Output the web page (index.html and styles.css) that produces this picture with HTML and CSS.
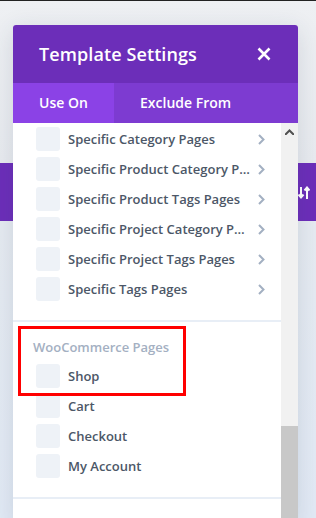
FILE: index.html
```html
<!DOCTYPE html>
<html lang="en">
<head>
  <meta charset="UTF-8">
  <title>Template Settings</title>
  <link rel="stylesheet" href="styles.css">
</head>
<body>

  <div class="pagina">
    <div class="topo"></div>
    <div class="barra">
      <span class="barra-icone">
        <svg width="12" height="14" viewBox="0 0 12 14">
          <path d="M3 1v10M0.5 8.5L3 11.5L5.5 8.5" stroke="#fff" stroke-width="2" fill="none"/>
          <path d="M9 13V2M6.5 4.5L9 1.5L11.5 4.5" stroke="#fff" stroke-width="2" fill="none"/>
        </svg>
      </span>
    </div>
    <div class="fundo"></div>
  </div>

  <div class="modal">
    <div class="cabecalho">
      <h1>Template Settings</h1>
      <svg class="fechar" width="14" height="14" viewBox="0 0 14 14">
        <path d="M1.5 1.5L12.5 12.5M12.5 1.5L1.5 12.5" stroke="#fff" stroke-width="2.6"/>
      </svg>
    </div>
    <div class="abas">
      <div class="aba ativa">Use On</div>
      <div class="aba">Exclude From</div>
    </div>

    <div class="corpo">
      <div class="lista">
        <div class="grupo">
          <div class="item"><span class="caixa"></span><span class="rotulo">Specific Category Pages</span><span class="seta"><svg width="7" height="11" viewBox="0 0 7 11"><path d="M1 1L5.5 5.5L1 10" stroke="#a3b0c2" stroke-width="2" fill="none"/></svg></span></div>
          <div class="item"><span class="caixa"></span><span class="rotulo">Specific Product Category Pages</span><span class="seta"><svg width="7" height="11" viewBox="0 0 7 11"><path d="M1 1L5.5 5.5L1 10" stroke="#a3b0c2" stroke-width="2" fill="none"/></svg></span></div>
          <div class="item"><span class="caixa"></span><span class="rotulo">Specific Product Tags Pages</span><span class="seta"><svg width="7" height="11" viewBox="0 0 7 11"><path d="M1 1L5.5 5.5L1 10" stroke="#a3b0c2" stroke-width="2" fill="none"/></svg></span></div>
          <div class="item"><span class="caixa"></span><span class="rotulo">Specific Project Category Pages</span><span class="seta"><svg width="7" height="11" viewBox="0 0 7 11"><path d="M1 1L5.5 5.5L1 10" stroke="#a3b0c2" stroke-width="2" fill="none"/></svg></span></div>
          <div class="item"><span class="caixa"></span><span class="rotulo">Specific Project Tags Pages</span><span class="seta"><svg width="7" height="11" viewBox="0 0 7 11"><path d="M1 1L5.5 5.5L1 10" stroke="#a3b0c2" stroke-width="2" fill="none"/></svg></span></div>
          <div class="item"><span class="caixa"></span><span class="rotulo">Specific Tags Pages</span><span class="seta"><svg width="7" height="11" viewBox="0 0 7 11"><path d="M1 1L5.5 5.5L1 10" stroke="#a3b0c2" stroke-width="2" fill="none"/></svg></span></div>
        </div>

        <div class="grupo woo">
          <div class="destaque"></div>
          <div class="titulo-grupo">WooCommerce Pages</div>
          <div class="item"><span class="caixa"></span><span class="rotulo">Shop</span></div>
          <div class="item"><span class="caixa"></span><span class="rotulo">Cart</span></div>
          <div class="item"><span class="caixa"></span><span class="rotulo">Checkout</span></div>
          <div class="item"><span class="caixa"></span><span class="rotulo">My Account</span></div>
        </div>
      </div>

      <div class="rolagem">
        <div class="rolagem-seta">
          <svg width="9" height="6" viewBox="0 0 9 6"><path d="M0 6L4.5 1.5L9 6" stroke="#505050" stroke-width="2" fill="none"/></svg>
        </div>
        <div class="rolagem-trilho"></div>
        <div class="rolagem-polegar"></div>
      </div>
    </div>
  </div>

</body>
</html>
```

FILE: styles.css
```css
body {
  margin: 0;
  font-family: "Open Sans", Arial, sans-serif;
  background: #e4ebf5;
  height: 518px;
  overflow: hidden;
}
.pagina {
  display: flex;
  flex-direction: column;
  height: 518px;
}
.topo {
  height: 163px;
  border-top: 1px solid #222;
  box-sizing: border-box;
  background: linear-gradient(#eef0f3, #e8ebef);
}
.barra {
  height: 58px;
  background-color: #6c2eb9;
  display: flex;
  justify-content: flex-end;
  align-items: center;
}
.barra-icone {
  width: 18px;
  display: flex;
  padding-top: 2px;
}
.fundo {
  flex: 1;
  background: linear-gradient(#e6ebf1, #e2eaf5);
}

.modal {
  position: absolute;
  left: 13px;
  top: 25px;
  width: 285px;
  height: 500px;
  background: #fff;
  border-radius: 3px 3px 0 0;
  box-shadow: 0 5px 24px rgba(40, 60, 90, 0.14);
  display: flex;
  flex-direction: column;
}
.cabecalho {
  height: 58px;
  background-color: #6c2eb9;
  border-radius: 3px 3px 0 0;
  display: flex;
  align-items: center;
  justify-content: space-between;
  padding: 0 27px 0 26px;
}
.cabecalho h1 {
  margin: 0;
  color: #fff;
  font-size: 18px;
  font-weight: 600;
  letter-spacing: 0.1px;
}
.abas {
  display: flex;
  height: 40px;
  background-color: #7d3bd1;
}
.aba {
  color: #fff;
  font-size: 14px;
  font-weight: 600;
  line-height: 40px;
  padding: 0 26px;
}
.aba.ativa {
  background-color: #8b42e6;
  width: 101px;
  box-sizing: border-box;
}

.corpo {
  flex: 1;
  display: flex;
  min-height: 0;
}
.lista {
  flex: 1;
  min-width: 0;
}
.grupo {
  padding: 1px 0 16px 0;
  border-bottom: 2px solid #e8eef6;
}
.grupo.woo {
  position: relative;
  padding: 13px 0 16px 0;
}
/* moldura vermelha de destaque sobre WooCommerce / Shop */
.destaque {
  position: absolute;
  left: 5px;
  top: 4px;
  width: 168px;
  height: 70px;
  border: 3px solid #f00;
  box-sizing: border-box;
}
.titulo-grupo {
  font-size: 13px;
  font-weight: 600;
  color: #a4b0c2;
  padding-left: 20px;
  height: 24px;
  line-height: 24px;
  margin-bottom: 2px;
}
.item {
  display: flex;
  align-items: center;
  height: 30px;
  padding-left: 23px;
}
.caixa {
  width: 24px;
  height: 24px;
  background-color: #eef2f7;
  border-radius: 3px;
  flex-shrink: 0;
}
.rotulo {
  margin-left: 8px;
  font-size: 13px;
  font-weight: 600;
  color: #4c5767;
  white-space: nowrap;
  overflow: hidden;
  text-overflow: ellipsis;
  width: 182px;
}
.seta {
  display: flex;
  margin-left: 8px;
}

.rolagem {
  width: 17px;
  background-color: #f1f1f1;
  display: flex;
  flex-direction: column;
}
.rolagem-seta {
  height: 17px;
  display: flex;
  justify-content: center;
  align-items: center;
}
.rolagem-trilho {
  height: 286px;
}
.rolagem-polegar {
  flex: 1;
  background-color: #c8c8c8;
}
```
